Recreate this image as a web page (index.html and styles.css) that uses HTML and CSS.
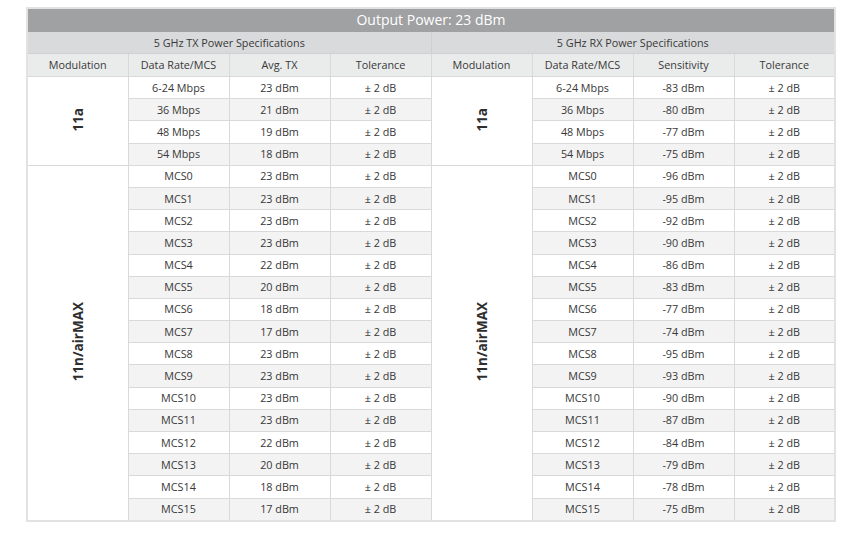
FILE: index.html
```html
<!DOCTYPE html>
<html>
<head>
<meta charset="utf-8">
<link rel="stylesheet" href="styles.css">
</head>
<body>
<div class="wrap">
<table class="spec">
<colgroup>
<col><col><col><col><col><col><col><col>
</colgroup>
<thead>
<tr class="title"><th colspan="8">Output Power: 23 dBm</th></tr>
<tr class="group"><th colspan="4">5 GHz TX Power Specifications</th><th colspan="4">5 GHz RX Power Specifications</th></tr>
<tr class="cols"><th>Modulation</th><th>Data Rate/MCS</th><th>Avg. TX</th><th>Tolerance</th><th>Modulation</th><th>Data Rate/MCS</th><th>Sensitivity</th><th>Tolerance</th></tr>
</thead>
<tbody>
<tr><td class="mod" rowspan="4"><span class="vert">11a</span></td><td>6-24 Mbps</td><td>23 dBm</td><td>± 2 dB</td><td class="mod" rowspan="4"><span class="vert">11a</span></td><td>6-24 Mbps</td><td>-83 dBm</td><td>± 2 dB</td></tr>
<tr class="alt"><td>36 Mbps</td><td>21 dBm</td><td>± 2 dB</td><td>36 Mbps</td><td>-80 dBm</td><td>± 2 dB</td></tr>
<tr><td>48 Mbps</td><td>19 dBm</td><td>± 2 dB</td><td>48 Mbps</td><td>-77 dBm</td><td>± 2 dB</td></tr>
<tr class="alt"><td>54 Mbps</td><td>18 dBm</td><td>± 2 dB</td><td>54 Mbps</td><td>-75 dBm</td><td>± 2 dB</td></tr>
<tr><td class="mod" rowspan="16"><span class="vert">11n/airMAX</span></td><td>MCS0</td><td>23 dBm</td><td>± 2 dB</td><td class="mod" rowspan="16"><span class="vert">11n/airMAX</span></td><td>MCS0</td><td>-96 dBm</td><td>± 2 dB</td></tr>
<tr class="alt"><td>MCS1</td><td>23 dBm</td><td>± 2 dB</td><td>MCS1</td><td>-95 dBm</td><td>± 2 dB</td></tr>
<tr><td>MCS2</td><td>23 dBm</td><td>± 2 dB</td><td>MCS2</td><td>-92 dBm</td><td>± 2 dB</td></tr>
<tr class="alt"><td>MCS3</td><td>23 dBm</td><td>± 2 dB</td><td>MCS3</td><td>-90 dBm</td><td>± 2 dB</td></tr>
<tr><td>MCS4</td><td>22 dBm</td><td>± 2 dB</td><td>MCS4</td><td>-86 dBm</td><td>± 2 dB</td></tr>
<tr class="alt"><td>MCS5</td><td>20 dBm</td><td>± 2 dB</td><td>MCS5</td><td>-83 dBm</td><td>± 2 dB</td></tr>
<tr><td>MCS6</td><td>18 dBm</td><td>± 2 dB</td><td>MCS6</td><td>-77 dBm</td><td>± 2 dB</td></tr>
<tr class="alt"><td>MCS7</td><td>17 dBm</td><td>± 2 dB</td><td>MCS7</td><td>-74 dBm</td><td>± 2 dB</td></tr>
<tr><td>MCS8</td><td>23 dBm</td><td>± 2 dB</td><td>MCS8</td><td>-95 dBm</td><td>± 2 dB</td></tr>
<tr class="alt"><td>MCS9</td><td>23 dBm</td><td>± 2 dB</td><td>MCS9</td><td>-93 dBm</td><td>± 2 dB</td></tr>
<tr><td>MCS10</td><td>23 dBm</td><td>± 2 dB</td><td>MCS10</td><td>-90 dBm</td><td>± 2 dB</td></tr>
<tr class="alt"><td>MCS11</td><td>23 dBm</td><td>± 2 dB</td><td>MCS11</td><td>-87 dBm</td><td>± 2 dB</td></tr>
<tr><td>MCS12</td><td>22 dBm</td><td>± 2 dB</td><td>MCS12</td><td>-84 dBm</td><td>± 2 dB</td></tr>
<tr class="alt"><td>MCS13</td><td>20 dBm</td><td>± 2 dB</td><td>MCS13</td><td>-79 dBm</td><td>± 2 dB</td></tr>
<tr><td>MCS14</td><td>18 dBm</td><td>± 2 dB</td><td>MCS14</td><td>-78 dBm</td><td>± 2 dB</td></tr>
<tr class="alt"><td>MCS15</td><td>17 dBm</td><td>± 2 dB</td><td>MCS15</td><td>-75 dBm</td><td>± 2 dB</td></tr>
</tbody>
</table>
</div>
</body>
</html>
```
FILE: styles.css
```css
html, body {
  margin: 0;
  padding: 0;
  background: #ffffff;
}
.wrap {
  padding: 7px 0 0 26px;
}
.spec {
  width: 810px;
  table-layout: fixed;
  border-collapse: collapse;
  font-family: "Open Sans", "Liberation Sans", sans-serif;
  font-size: 10.8px;
  color: #383838;
  border: 2px solid #e2e2e2;
}
.spec th, .spec td {
  border: 1px solid #d9d9d9;
  text-align: center;
  vertical-align: middle;
  padding: 0;
  font-weight: normal;
  line-height: 14px;
}
.spec tbody td {
  height: 21.2px;
}
.title th {
  background: #a0a1a3;
  color: #ffffff;
  font-size: 14px;
  height: 22px;
  border-color: #a0a1a3;
}
.group th {
  background: #d9dadb;
  height: 21px;
  border-color: #d0d0d0;
}
.cols th {
  background: #eaebeb;
  height: 22px;
}
.alt td {
  background: #f3f3f3;
}
.spec td.mod {
  background: #ffffff;
}
.vert {
  display: inline-block;
  writing-mode: vertical-rl;
  transform: rotate(180deg);
  font-weight: bold;
  font-size: 13.5px;
  color: #2e2e2e;
  line-height: 16px;
}
```
